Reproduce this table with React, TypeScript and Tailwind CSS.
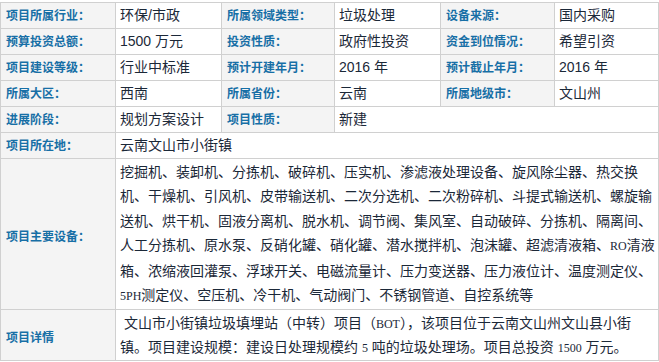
const LABEL =
  "bg-[#f4f4f4] border border-[#d0d0d0] pl-[5px] pr-1 text-[12px] font-bold text-[#176fa6] whitespace-nowrap";
const VALUE =
  "bg-white border border-[#d0d0d0] pl-[4px] pr-1 text-[14px] text-[#1b2838] whitespace-nowrap";

const GRID = [
  ["项目所属行业：", "环保/市政", "所属领域类型：", "垃圾处理", "设备来源：", "国内采购"],
  ["预算投资总额：", "1500 万元", "投资性质：", "政府性投资", "资金到位情况：", "希望引资"],
  ["项目建设等级：", "行业中标准", "预计开建年月：", "2016 年", "预计截止年月：", "2016 年"],
  ["所属大区：", "西南", "所属省份：", "云南", "所属地级市：", "文山州"],
];

const EQUIPMENT = [
  "挖掘机、装卸机、分拣机、破碎机、压实机、渗滤液处理设备、旋风除尘器、热交换",
  "机、干燥机、引风机、皮带输送机、二次分选机、二次粉碎机、斗提式输送机、螺旋输",
  "送机、烘干机、固液分离机、脱水机、调节阀、集风室、自动破碎、分拣机、隔离间、",
];

const Latin = ({ children }: { children: string }) => (
  <span className="text-[12px]" style={{ fontFamily: '"Liberation Serif", serif' }}>
    {children}
  </span>
);

export default function App() {
  return (
    <div
      className="w-[659px] h-[362px] bg-white pt-[2px]"
      style={{ fontFamily: '"Liberation Sans", "Noto Sans CJK SC", sans-serif' }}
    >
      <table className="border-collapse table-fixed w-[658px]">
        <colgroup>
          <col className="w-[115px]" />
          <col className="w-[106px]" />
          <col className="w-[113px]" />
          <col className="w-[106px]" />
          <col className="w-[114px]" />
          <col className="w-[104px]" />
        </colgroup>
        <tbody>
          {GRID.map((row, i) => (
            <tr key={i} className="h-[26px]">
              {row.map((cell, j) => (
                <td key={j} className={j % 2 === 0 ? LABEL : VALUE}>
                  {cell}
                </td>
              ))}
            </tr>
          ))}
          <tr className="h-[26px]">
            <td className={LABEL}>进展阶段：</td>
            <td className={VALUE}>规划方案设计</td>
            <td className={LABEL}>项目性质：</td>
            <td className={VALUE} colSpan={3}>
              新建
            </td>
          </tr>
          <tr className="h-[26px]">
            <td className={LABEL}>项目所在地：</td>
            <td className={VALUE} colSpan={5}>
              云南文山市小街镇
            </td>
          </tr>
          <tr className="h-[151px]">
            <td className={`${LABEL} pt-[6px]`}>项目主要设备：</td>
            <td className={`${VALUE} leading-[24.5px]`} colSpan={5}>
              {EQUIPMENT.map((line) => (
                <div key={line}>{line}</div>
              ))}
              <div>
                人工分拣机、原水泵、反硝化罐、硝化罐、潜水搅拌机、泡沫罐、超滤清液箱、<Latin>RO</Latin>清液
              </div>
              <div>箱、浓缩液回灌泵、浮球开关、电磁流量计、压力变送器、压力液位计、温度测定仪、</div>
              <div>
                <Latin>5PH</Latin>测定仪、空压机、冷干机、气动阀门、不锈钢管道、自控系统等
              </div>
            </td>
          </tr>
          <tr className="h-[51px]">
            <td className={`${LABEL} pt-[6px]`}>项目详情</td>
            <td className={`${VALUE} pt-[2px] leading-[23px]`} colSpan={5}>
              <div className="whitespace-pre">
                {" 文山市小街镇垃圾填埋站（中转）项目（"}
                <Latin>BOT</Latin>
                {"），该项目位于云南文山州文山县小街"}
              </div>
              <div>
                镇。项目建设规模：建设日处理规模约 <Latin>5</Latin> 吨的垃圾处理场。项目总投资 <Latin>1500</Latin> 万元。
              </div>
            </td>
          </tr>
        </tbody>
      </table>
    </div>
  );
}
